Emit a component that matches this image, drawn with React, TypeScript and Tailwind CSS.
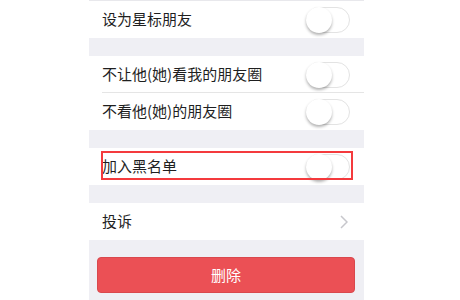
import React from 'react';

function Toggle() {
  return (
    <div className="relative h-[26px] w-[44px] rounded-full border border-[#e3e3e3] bg-white">
      <div className="absolute left-[-1px] top-[-1px] h-[26px] w-[26px] rounded-full bg-white shadow-[0_2px_3px_rgba(0,0,0,0.3)]" />
    </div>
  );
}

function Row({ label, children, divider }: { label: string; children?: React.ReactNode; divider?: boolean }) {
  return (
    <div className="relative flex h-[37px] items-center bg-white pl-[13px] pr-[14px]">
      <span className="flex-1 text-[15px] text-[#1f1f1f]">{label}</span>
      {children}
      {divider && <div className="absolute bottom-0 left-[13px] right-0 h-px bg-[#e5e5e5]" />}
    </div>
  );
}

export default function App() {
  return (
    <div className="h-[300px] w-[460px] overflow-hidden bg-white" style={{ fontFamily: '"Noto Sans CJK SC", "Noto Sans", sans-serif' }}>
      <div className="ml-[89px] flex h-full w-[275px] flex-col bg-[#efeff4]">
        <div className="h-px bg-[#e8e8ec]" />
        <Row label="设为星标朋友">
          <Toggle />
        </Row>
        <div className="h-[18px]" />
        <Row label="不让他(她)看我的朋友圈" divider>
          <Toggle />
        </Row>
        <Row label="不看他(她)的朋友圈">
          <Toggle />
        </Row>
        <div className="h-[18px]" />
        <div className="relative">
          <Row label="加入黑名单">
            <Toggle />
          </Row>
          <div className="absolute left-[12px] top-[3px] h-[29px] w-[252px] border-2 border-[#f43a3d]" />
        </div>
        <div className="h-[18px]" />
        <Row label="投诉">
          <svg width="8" height="14" viewBox="0 0 8 14" className="mr-[2px]">
            <path d="M1 1l6 6-6 6" fill="none" stroke="#c7c7cc" strokeWidth="1.5" />
          </svg>
        </Row>
        <div className="h-[17px]" />
        <button className="ml-[8px] flex h-[36px] w-[258px] items-center justify-center rounded-[4px] border border-[#d9484d] bg-[#eb5055] text-[15px] text-white">
          删除
        </button>
      </div>
    </div>
  );
}
